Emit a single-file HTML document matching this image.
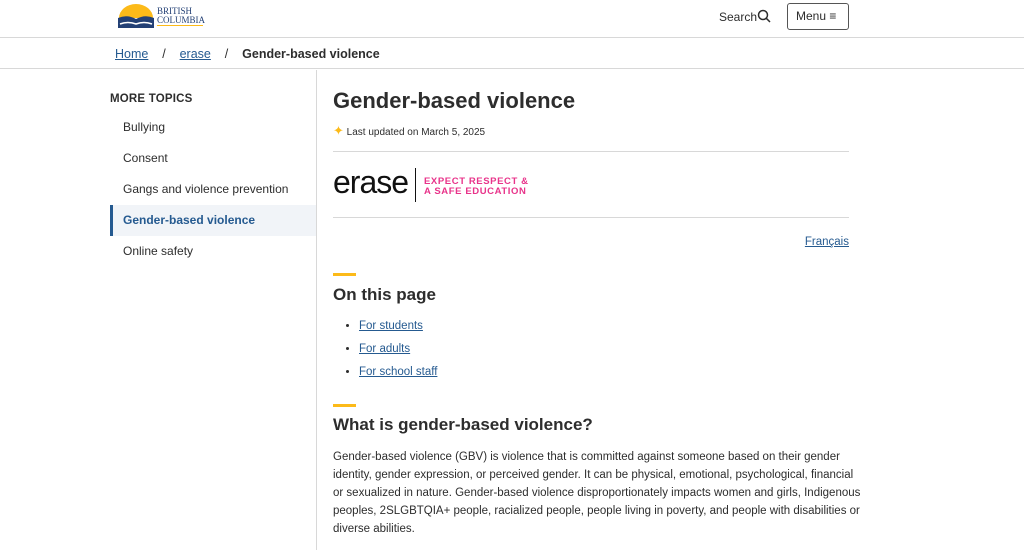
<!DOCTYPE html>
<html><head><meta charset="utf-8"><style>
*{margin:0;padding:0;box-sizing:border-box}
body{width:1024px;height:550px;overflow:hidden;background:#fff;font-family:"Liberation Sans",sans-serif;color:#2d2d2d}
.hdr{height:38px;border-bottom:1px solid #d8d8d8;position:relative}
.bc{height:31px;border-bottom:1px solid #d8d8d8;position:relative;font-size:12.5px}
a{color:#255a90;text-decoration:underline}
.side{position:absolute;left:110px;top:70px;width:207px;height:480px;border-right:1px solid #d8d8d8}
.side .t{font-size:11.5px;font-weight:bold;margin-top:23px;letter-spacing:.2px}
.side .i{font-size:12px;height:31px;line-height:31px;padding-left:13px}
.main{position:absolute;left:333px;top:70px;width:516px}
h1{font-size:22px;margin-top:18px;font-weight:bold}
h2{font-size:17px;font-weight:bold}
.bar{width:23px;height:3px;background:#fcba19}
li{font-size:11.5px;height:23px;line-height:23px}
p{font-size:11.5px;line-height:18px;width:532px}
</style></head><body>
<div class="hdr">
 <svg style="position:absolute;left:118px;top:4px" width="36" height="24" viewBox="0 0 36 24"><path d="M1 14 A17 14 0 0 1 35 14Z" fill="#fcba19"/><path d="M0 14 Q9 10 18 15 Q27 10 36 14 L36 24 L0 24Z" fill="#234075"/><path d="M2 20 Q10 17 18 20 Q26 17 34 20" stroke="#fff" stroke-width="1.5" fill="none"/></svg>
 <div style="position:absolute;left:157px;top:7px;font-family:'Liberation Serif',serif;font-size:9px;line-height:9px;color:#234075">BRITISH<br>COLUMBIA</div>
 <div style="position:absolute;left:157px;top:25px;width:46px;height:1px;background:#fcba19"></div>
 <div style="position:absolute;left:719px;top:10px;font-size:12px">Search</div>
 <svg style="position:absolute;left:757px;top:9px" width="14" height="14" viewBox="0 0 14 14"><circle cx="6" cy="6" r="4.5" stroke="#2d2d2d" stroke-width="1.5" fill="none"/><path d="M9.3 9.3L13 13" stroke="#2d2d2d" stroke-width="1.5"/></svg>
 <div style="position:absolute;left:787px;top:3px;width:62px;height:27px;border:1px solid #555;border-radius:3px;font-size:12px;line-height:25px;padding-left:8px">Menu ≡</div>
</div>
<div class="bc"><div style="position:absolute;left:115px;top:9px"><a>Home</a>&nbsp;&nbsp;&nbsp;&nbsp;/&nbsp;&nbsp;&nbsp;&nbsp;<a>erase</a>&nbsp;&nbsp;&nbsp;&nbsp;/&nbsp;&nbsp;&nbsp;&nbsp;<b>Gender-based violence</b></div></div>
<div class="side">
 <div class="t">MORE TOPICS</div>
 <div style="margin-top:7px">
 <div class="i">Bullying</div><div class="i">Consent</div><div class="i">Gangs and violence prevention</div>
 <div class="i" style="background:#f1f4f8;border-left:3px solid #255a90;padding-left:10px;color:#255a90;font-weight:bold">Gender-based violence</div>
 <div class="i">Online safety</div></div>
</div>
<div class="main">
 <h1>Gender-based violence</h1>
 <div style="font-size:10px;margin-top:9px"><span style="color:#fcba19;font-size:13px">✦</span> Last updated on March 5, 2025</div>
 <div style="border-top:1px solid #d8d8d8;margin-top:12px;height:67px;border-bottom:1px solid #d8d8d8;position:relative">
  <div style="position:absolute;left:0;top:12px;font-size:32px;color:#111;letter-spacing:-1px">erase</div>
  <div style="position:absolute;left:82px;top:16px;width:1px;height:34px;background:#111"></div>
  <div style="position:absolute;left:91px;top:25px;font-size:9.5px;line-height:10px;font-weight:bold;color:#e8338a;letter-spacing:.6px">EXPECT RESPECT &amp;<br>A SAFE EDUCATION</div>
 </div>
 <div style="text-align:right;font-size:11.5px;margin-top:18px"><a>Français</a></div>
 <div class="bar" style="margin-top:25px"></div>
 <h2 style="margin-top:9px">On this page</h2>
 <ul style="margin:10px 0 0 26px"><li><a>For students</a></li><li><a>For adults</a></li><li><a>For school staff</a></li></ul>
 <div class="bar" style="margin-top:20px"></div>
 <h2 style="margin-top:8px">What is gender-based violence?</h2>
 <p style="margin-top:13px">Gender-based violence (GBV) is violence that is committed against someone based on their gender identity, gender expression, or perceived gender. It can be physical, emotional, psychological, financial or sexualized in nature. Gender-based violence disproportionately impacts women and girls, Indigenous peoples, 2SLGBTQIA+ people, racialized people, people living in poverty, and people with disabilities or diverse abilities.</p>
</div>
</body></html>
